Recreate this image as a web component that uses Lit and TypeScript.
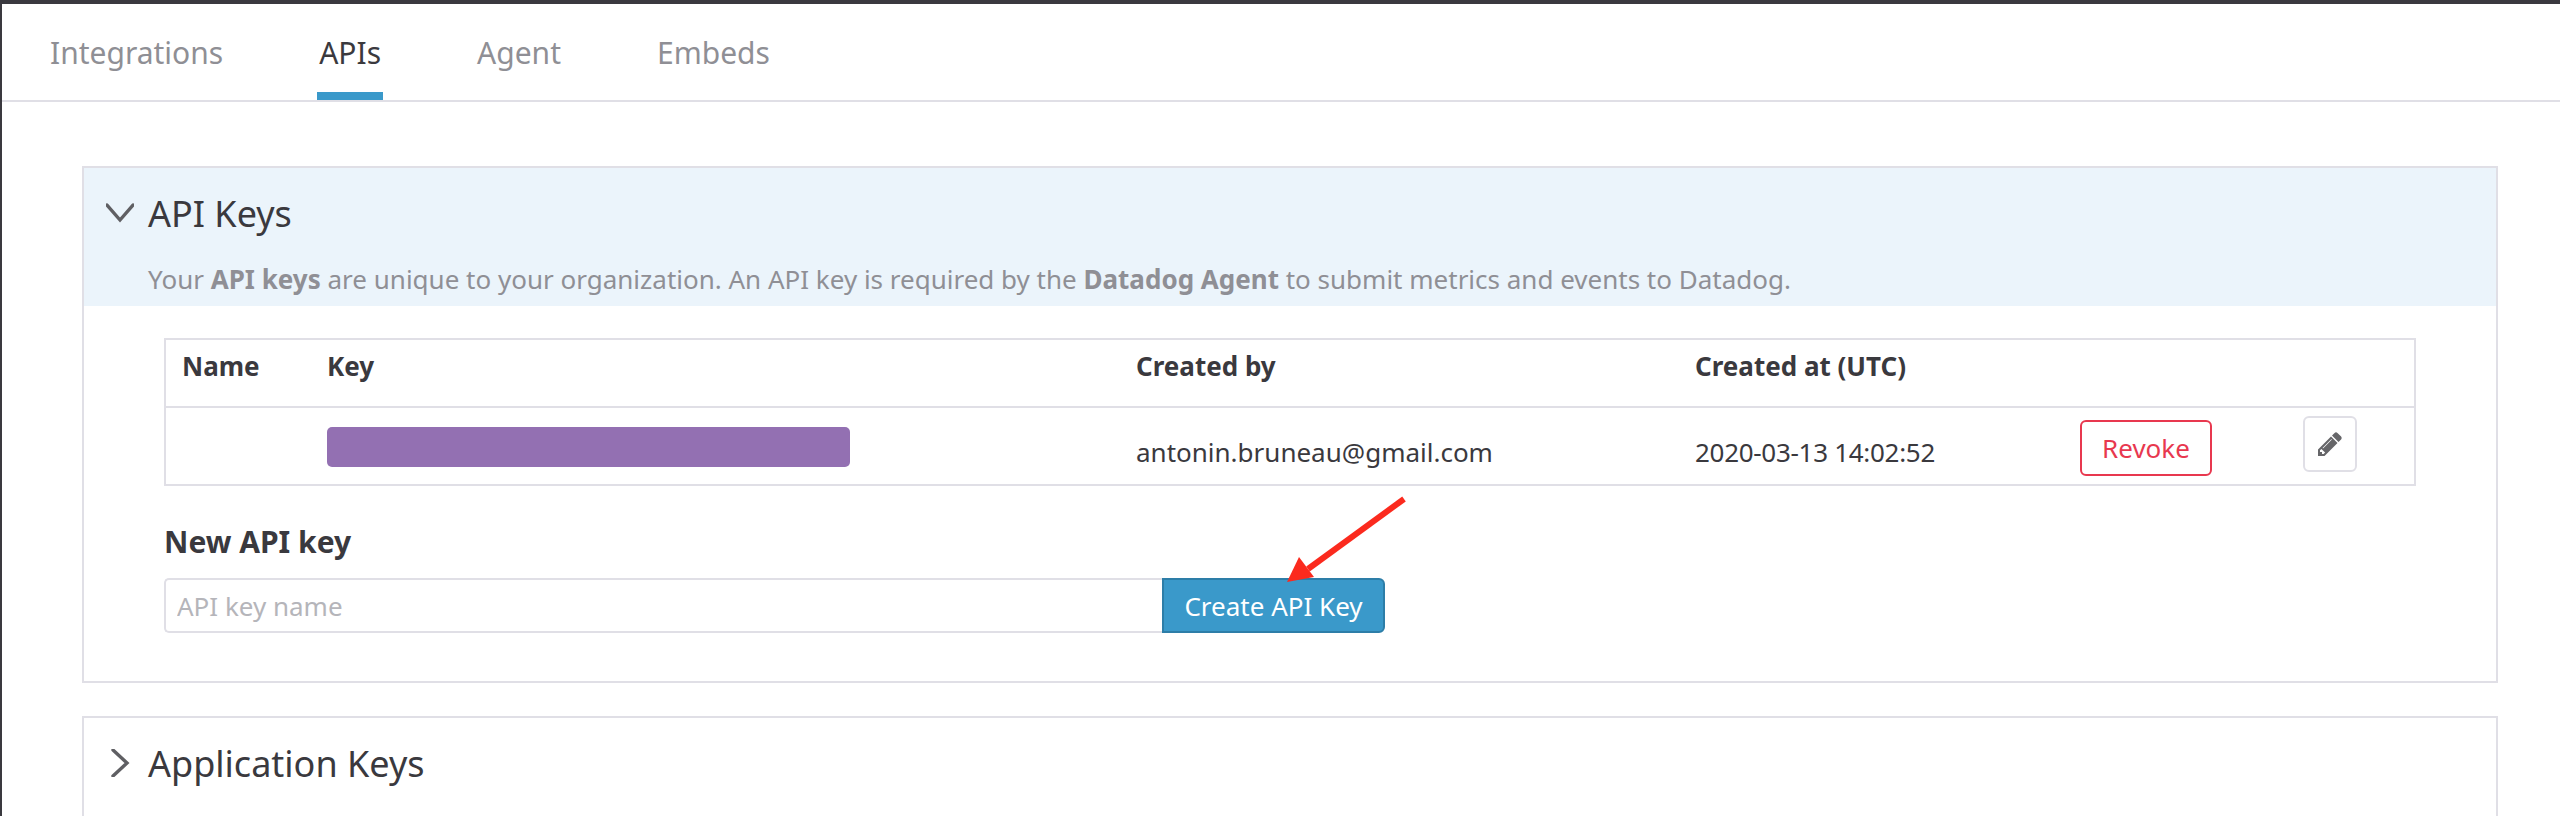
import { LitElement, html, css } from 'lit';
import { customElement } from 'lit/decorators.js';

@customElement('app-root')
export class AppRoot extends LitElement {
  static styles = css`
    :host {
      display: block;
      position: relative;
      height: 816px;
      overflow: hidden;
      box-sizing: border-box;
      background: #fff;
      border-top: 4px solid #3a393f;
      border-left: 2px solid #3a393f;
      font-family: 'Noto Sans', sans-serif;
      color: #3a393e;
    }

    .tabs {
      display: flex;
      gap: 92px;
      height: 96px;
      padding-left: 46px;
      border-bottom: 2px solid #e0dfe6;
    }

    .tab {
      padding: 0 2px;
      font-size: 30px;
      line-height: 98px;
      color: #8f8f95;
    }

    .tab.active {
      color: #3a393e;
      box-shadow: inset 0 -8px 0 #3a99ca;
    }

    .content {
      display: flex;
      flex-direction: column;
      gap: 33px;
      padding: 64px 62px 0 80px;
    }

    .panel {
      border: 2px solid #e0dfe6;
    }

    .panel-head {
      background: #ebf4fb;
      padding: 0 22px;
      height: 138px;
    }

    .panel-head.closed {
      background: #fff;
    }

    .panel-title {
      display: flex;
      align-items: center;
      gap: 14px;
      height: 90px;
      font-size: 36px;
    }

    .panel-title svg {
      flex: none;
      width: 28px;
      height: 28px;
      fill: none;
      stroke: #5f5f63;
      stroke-width: 3.4;
      stroke-linecap: round;
    }

    .desc {
      margin: 0;
      padding: 5px 0 0 42px;
      font-size: 26px;
      line-height: 32px;
      color: #8f8f95;
    }

    .desc b {
      font-weight: 700;
    }

    .panel-body {
      padding: 32px 80px 48px;
    }

    .table {
      border: 2px solid #e0dfe6;
    }

    .row {
      display: grid;
      grid-template-columns: 145px 809px 559px 401px 223px 1fr;
      align-items: center;
    }

    .row.head {
      height: 66px;
      border-bottom: 2px solid #e0dfe6;
      font-size: 26px;
      font-weight: 700;
    }

    .row.head .cell {
      margin-top: -14px;
    }

    .row.body {
      height: 76px;
      font-size: 26px;
    }

    .row.body .text {
      margin-top: 12px;
    }

    .row.body .stamp {
      letter-spacing: -0.3px;
    }

    .cell {
      padding-left: 16px;
    }

    .key-mask {
      height: 40px;
      width: 523px;
      margin-top: 2px;
      background: #9370b2;
      border-radius: 5px;
    }

    .revoke {
      box-sizing: border-box;
      width: 132px;
      height: 56px;
      margin-top: 4px;
      border: 2px solid #e8384f;
      border-radius: 6px;
      background: #fff;
      color: #e8384f;
      font: 26px 'Noto Sans', sans-serif;
      padding: 0;
    }

    .edit {
      display: flex;
      align-items: center;
      justify-content: center;
      box-sizing: border-box;
      width: 54px;
      height: 56px;
      margin-top: -4px;
      border: 2px solid #e0dfe6;
      border-radius: 6px;
      background: #fff;
      padding: 0;
    }

    .edit svg {
      width: 28px;
      height: 28px;
      fill: #666669;
    }

    h3 {
      margin: 0;
      padding: 36px 0 17px;
      font-size: 30px;
      line-height: 39px;
      font-weight: 700;
    }

    .new-key {
      display: flex;
      height: 55px;
    }

    .field {
      box-sizing: border-box;
      width: 998px;
      height: 55px;
      padding: 0 11px;
      border: 2px solid #e0dfe6;
      border-right: none;
      border-radius: 5px 0 0 5px;
      font: 26px 'Noto Sans', sans-serif;
      outline: none;
    }

    .field::placeholder {
      color: #b5b5ba;
    }

    .create {
      box-sizing: border-box;
      width: 223px;
      height: 55px;
      border: 2px solid #2d7ea8;
      border-radius: 0 6px 6px 0;
      background: #3a99ca;
      color: #fff;
      font: 26px 'Noto Sans', sans-serif;
      padding: 0;
    }

    .arrow {
      position: absolute;
      left: 1278px;
      top: 490px;
      width: 130px;
      height: 95px;
    }
  `;

  render() {
    return html`
      <nav class="tabs">
        <div class="tab">Integrations</div>
        <div class="tab active">APIs</div>
        <div class="tab">Agent</div>
        <div class="tab">Embeds</div>
      </nav>

      <div class="content">
        <section class="panel">
          <div class="panel-head">
            <div class="panel-title">
              <svg viewBox="0 0 28 28"><path d="M1 6l13 15L27 6" /></svg>
              API Keys
            </div>
            <p class="desc">
              Your <b>API keys</b> are unique to your organization. An API key is required by the
              <b>Datadog Agent</b> to submit metrics and events to Datadog.
            </p>
          </div>
          <div class="panel-body">
            <div class="table">
              <div class="row head">
                <div class="cell">Name</div>
                <div class="cell">Key</div>
                <div class="cell">Created by</div>
                <div class="cell">Created at (UTC)</div>
                <div></div>
                <div></div>
              </div>
              <div class="row body">
                <div></div>
                <div class="cell"><div class="key-mask"></div></div>
                <div class="cell text">antonin.bruneau@gmail.com</div>
                <div class="cell text stamp">2020-03-13 14:02:52</div>
                <div><button class="revoke">Revoke</button></div>
                <div>
                  <button class="edit">
                    <svg viewBox="0 0 1792 1792">
                      <path
                        d="M491 1536l91-91-235-235-91 91v107h128v128h107zm523-928q0-22-22-22-10 0-17 7l-542 542q-7 7-7 17 0 22 22 22 10 0 17-7l542-542q7-7 7-17zm-54-192l416 416-832 832h-416v-416zm683 96q0 53-37 90l-166 166-416-416 166-165q36-38 90-38 53 0 91 38l235 234q37 39 37 91z"
                      />
                    </svg>
                  </button>
                </div>
              </div>
            </div>
            <h3>New API key</h3>
            <div class="new-key">
              <input class="field" placeholder="API key name" />
              <button class="create">Create API Key</button>
            </div>
          </div>
        </section>

        <section class="panel">
          <div class="panel-head closed">
            <div class="panel-title">
              <svg viewBox="0 0 28 28"><path d="M7 1l14 13L7 27" /></svg>
              Application Keys
            </div>
          </div>
        </section>
      </div>

      <!-- red annotation arrow -->
      <svg class="arrow" viewBox="0 0 130 95">
        <path d="M124 5L28 75" stroke="#fb2a1e" stroke-width="6" fill="none" />
        <path d="M7 88L19 63L34 83Z" fill="#fb2a1e" />
      </svg>
    `;
  }
}
